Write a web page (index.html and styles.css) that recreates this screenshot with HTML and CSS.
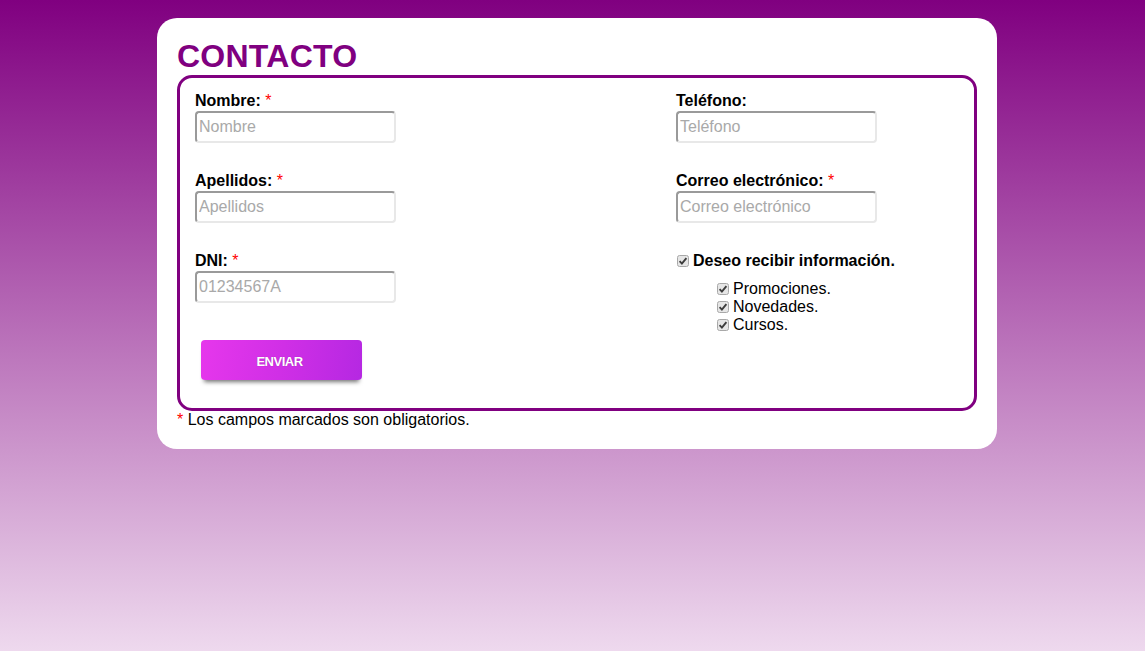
FILE: index.html
```html
<!DOCTYPE html>
<html lang="es">
<head>
<meta charset="utf-8">
<title>Contacto</title>
<link rel="stylesheet" href="styles.css">
</head>
<body>
<div class="card">
  <h1 class="title">CONTACTO</h1>
  <div class="box">
    <div class="col col-left">
      <div class="row">
        <label class="lbl">Nombre: <span class="req">*</span></label>
        <input class="field" type="text" placeholder="Nombre">
      </div>
      <div class="row">
        <label class="lbl">Apellidos: <span class="req">*</span></label>
        <input class="field" type="text" placeholder="Apellidos">
      </div>
      <div class="row">
        <label class="lbl">DNI: <span class="req">*</span></label>
        <input class="field" type="text" placeholder="01234567A">
      </div>
      <button class="send" type="button">ENVIAR</button>
    </div>
    <div class="col col-right">
      <div class="row">
        <label class="lbl">Teléfono:</label>
        <input class="field" type="text" placeholder="Teléfono">
      </div>
      <div class="row">
        <label class="lbl">Correo electrónico: <span class="req">*</span></label>
        <input class="field" type="text" placeholder="Correo electrónico">
      </div>
      <div class="opt-main">
        <span class="chk"><svg width="12" height="12" viewBox="0 0 12 12"><rect x="0.5" y="0.5" width="11" height="11" rx="2" fill="#e6e6e6" stroke="#a8a8a8"/><path d="M2.6 6.2 L4.9 8.6 L9.4 3.2" fill="none" stroke="#3c3c3c" stroke-width="1.9"/></svg></span>
        <span class="opt-main-text">Deseo recibir información.</span>
      </div>
      <div class="opt-list">
        <div class="opt"><span class="chk"><svg width="12" height="12" viewBox="0 0 12 12"><rect x="0.5" y="0.5" width="11" height="11" rx="2" fill="#e6e6e6" stroke="#a8a8a8"/><path d="M2.6 6.2 L4.9 8.6 L9.4 3.2" fill="none" stroke="#3c3c3c" stroke-width="1.9"/></svg></span><span>Promociones.</span></div>
        <div class="opt"><span class="chk"><svg width="12" height="12" viewBox="0 0 12 12"><rect x="0.5" y="0.5" width="11" height="11" rx="2" fill="#e6e6e6" stroke="#a8a8a8"/><path d="M2.6 6.2 L4.9 8.6 L9.4 3.2" fill="none" stroke="#3c3c3c" stroke-width="1.9"/></svg></span><span>Novedades.</span></div>
        <div class="opt"><span class="chk"><svg width="12" height="12" viewBox="0 0 12 12"><rect x="0.5" y="0.5" width="11" height="11" rx="2" fill="#e6e6e6" stroke="#a8a8a8"/><path d="M2.6 6.2 L4.9 8.6 L9.4 3.2" fill="none" stroke="#3c3c3c" stroke-width="1.9"/></svg></span><span>Cursos.</span></div>
      </div>
    </div>
  </div>
  <p class="note"><span class="req">*</span> Los campos marcados son obligatorios.</p>
</div>
</body>
</html>
```

FILE: styles.css
```css
html, body {
  margin: 0;
  padding: 0;
}
body {
  min-height: 651px;
  background: linear-gradient(to bottom, #800080 0%, #eed9ee 100%);
  font-family: "Liberation Sans", Arial, sans-serif;
  font-size: 16px;
  color: #000;
  padding-top: 18px;
  box-sizing: border-box;
}
.card {
  width: 840px;
  margin-left: 157px;
  box-sizing: border-box;
  background: #fff;
  border-radius: 20px;
  padding: 20px 20px 20px 20px;
}
.title {
  margin: 0;
  font-size: 32px;
  line-height: 37px;
  font-weight: bold;
  letter-spacing: 0.25px;
  color: #800080;
}
.box {
  border: 3px solid #800080;
  border-radius: 15px;
  padding: 14px 15px 28px 15px;
  display: grid;
  grid-template-columns: 481px 1fr;
}
.col {
  display: flex;
  flex-direction: column;
  align-items: flex-start;
}
.row {
  display: flex;
  flex-direction: column;
  align-items: flex-start;
  margin-bottom: 29px;
}
.lbl {
  font-weight: bold;
  line-height: 18px;
  margin-bottom: 1px;
}
.req {
  color: #ff0000;
  font-weight: normal;
}
.field {
  width: 201px;
  height: 32px;
  box-sizing: border-box;
  border-style: solid;
  border-width: 2px;
  border-color: #9a9a9a #e8e8e8 #e8e8e8 #9a9a9a;
  border-radius: 4px;
  padding: 0 2px;
  font-family: "Liberation Sans", Arial, sans-serif;
  font-size: 16px;
  background: #fff;
  outline: none;
}
.field::placeholder {
  color: #a9a9a9;
}
.send {
  margin: 8px 0 0 6px;
  width: 161px;
  height: 40px;
  border: none;
  border-radius: 4px;
  background: linear-gradient(100deg, #e637ec 0%, #d02fe6 50%, #b528e2 100%);
  color: #fff;
  font-family: "Liberation Sans", Arial, sans-serif;
  font-size: 13px;
  font-weight: bold;
  letter-spacing: -0.5px;
  text-shadow: 0 0 1px rgba(80, 0, 80, 0.4);
  box-shadow: 0 5px 4px -3px rgba(0, 0, 0, 0.55);
  cursor: pointer;
  padding: 3px 4px 0 0;
}
.opt-main {
  display: flex;
  align-items: center;
  height: 18px;
  margin-top: 0;
}
.opt-main-text {
  font-weight: bold;
  margin-left: 4px;
}
.chk {
  display: inline-flex;
  width: 12px;
  height: 12px;
  margin-left: 1px;
}
.opt-list {
  margin-top: 10px;
  margin-left: 40px;
  display: flex;
  flex-direction: column;
}
.opt {
  display: flex;
  align-items: center;
  height: 18px;
  gap: 4px;
}
.note {
  margin: 0;
  line-height: 18px;
}
```
